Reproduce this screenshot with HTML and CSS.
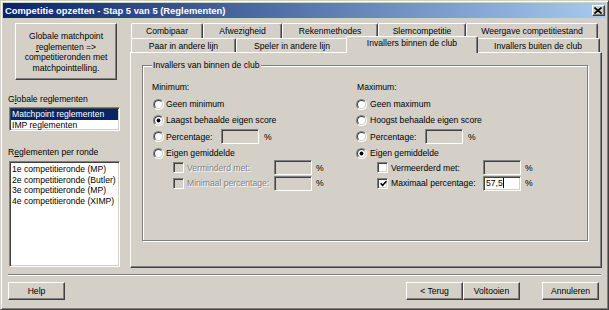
FILE: index.html
```html
<!DOCTYPE html>
<html>
<head>
<meta charset="utf-8">
<link rel="stylesheet" href="styles.css">
</head>
<body>
<div class="window">
  <div class="titlebar">
    <span class="title">Competitie opzetten - Stap 5 van 5 (Reglementen)</span>
    <span class="close"><svg width="8" height="7" viewBox="0 0 8 7"><path d="M0.5 0.5 L7.5 6.5 M7.5 0.5 L0.5 6.5" stroke="#000" stroke-width="1.6" fill="none"/></svg></span>
  </div>
  <div class="main">
    <div class="left">
      <div class="btn big"><span class="btxt">Globale matchpoint<br><u>r</u>eglementen =&gt;<br>competitieronden met<br>matchpointtelling.</span></div>
      <div class="label l1">G<u>l</u>obale reglementen</div>
      <div class="list list1">
        <div class="item sel">Matchpoint reglementen</div>
        <div class="item">IMP reglementen</div>
      </div>
      <div class="label l2">R<u>e</u>glementen per ronde</div>
      <div class="list list2">
        <div class="item">1e competitieronde (MP)</div>
        <div class="item">2e competitieronde (Butler)</div>
        <div class="item">3e competitieronde (MP)</div>
        <div class="item">4e competitieronde (XIMP)</div>
      </div>
    </div>
    <div class="tabctl">
      <div class="tabrow r1">
        <div class="tab w72">Combipaar</div>
        <div class="tab w79">Afwezigheid</div>
        <div class="tab w96">Rekenmethodes</div>
        <div class="tab w88">Slemcompetitie</div>
        <div class="tab w132">Weergave competitiestand</div>
      </div>
      <div class="tabrow r2">
        <div class="tab w105">Paar in andere lijn</div>
        <div class="tab w112">Speler in andere lijn</div>
        <div class="tab active">Invallers binnen de club</div>
        <div class="tab w124">Invallers buiten de club</div>
      </div>
      <div class="page">
        <fieldset class="group">
          <legend class="legend">Invallers van binnen de club</legend>
          <div class="cols">
            <div class="col colmin">
              <div class="heading">Minimum:</div>
              <div class="rrow"><span class="radio"><span class="rin"></span></span><span class="rlabel">Geen minimum</span></div>
              <div class="rrow"><span class="radio"><span class="rin"><span class="dot"></span></span></span><span class="rlabel">Laagst behaalde eigen score</span></div>
              <div class="rrow"><span class="radio"><span class="rin"></span></span><span class="rlabel plabel">Percentage:</span><span class="edit off"></span><span class="pct">%</span></div>
              <div class="rrow"><span class="radio"><span class="rin"></span></span><span class="rlabel">Eigen gemiddelde</span></div>
              <div class="crow first"><span class="check off"></span><span class="clabel dis cmin">Verminderd met:</span><span class="edit off"></span><span class="pct">%</span></div>
              <div class="crow"><span class="check off"></span><span class="clabel dis cmin">Minimaal percentage:</span><span class="edit off"></span><span class="pct">%</span></div>
            </div>
            <div class="col colmax">
              <div class="heading">Maximum:</div>
              <div class="rrow"><span class="radio"><span class="rin"></span></span><span class="rlabel">Geen maximum</span></div>
              <div class="rrow"><span class="radio"><span class="rin"></span></span><span class="rlabel">Hoogst behaalde eigen score</span></div>
              <div class="rrow"><span class="radio"><span class="rin"></span></span><span class="rlabel plabel">Percentage:</span><span class="edit off"></span><span class="pct">%</span></div>
              <div class="rrow"><span class="radio"><span class="rin"><span class="dot"></span></span></span><span class="rlabel">Eigen gemiddelde</span></div>
              <div class="crow first"><span class="check"></span><span class="clabel cmax">Vermeerderd met:</span><span class="edit off"></span><span class="pct">%</span></div>
              <div class="crow"><span class="check"><svg width="7" height="7" viewBox="0 0 7 7"><path d="M0.6 3.2 L2.6 5.4 L6.4 1.2" stroke="#000" stroke-width="1.6" fill="none"/></svg></span><span class="clabel cmax">Maximaal percentage:</span><span class="edit on">57,5<span class="caret"></span></span><span class="pct">%</span></div>
            </div>
          </div>
        </fieldset>
      </div>
    </div>
  </div>
  <div class="sep"></div>
  <div class="buttons">
    <div class="btn pb">Help</div>
    <div class="btn pb back">&lt; Terug</div>
    <div class="btn pb">Voltooien</div>
    <div class="btn pb cancel">Annuleren</div>
  </div>
</div>
</body>
</html>
```

FILE: styles.css
```css
* { box-sizing: border-box; }
html, body { margin: 0; padding: 0; }
body {
  width: 609px;
  height: 310px;
  overflow: hidden;
  background: #d4d0c8;
  font-family: "Liberation Sans", Arial, sans-serif;
  font-size: 8.6px;
  color: #000;
}
.window {
  width: 609px;
  height: 310px;
  border: 1px solid;
  border-color: #d4d0c8 #404040 #404040 #d4d0c8;
  box-shadow: inset 1px 1px #fff, inset -1px -1px #808080;
  padding: 2px;
  background: #d4d0c8;
}
.titlebar {
  height: 15px;
  background: linear-gradient(to right, #0a246a, #a6caf0);
  display: flex;
  align-items: center;
  justify-content: space-between;
  padding-left: 2px;
}
.title {
  color: #fff;
  font-weight: bold;
  font-size: 9.4px;
  white-space: nowrap;
}
.close {
  width: 13px;
  height: 11px;
  margin-right: 1px;
  background: #d4d0c8;
  border: 1px solid;
  border-color: #fff #404040 #404040 #fff;
  box-shadow: inset -1px -1px #808080;
  display: flex;
  align-items: center;
  justify-content: center;
}
.close svg { display: block; margin-left: -1px; margin-top: -1px; }

.main {
  height: 256px;
  display: flex;
  padding-left: 5px;
}
.left {
  width: 112px;
  padding-top: 5px;
  display: flex;
  flex-direction: column;
}
.btn {
  background: #d4d0c8;
  border: 1px solid;
  border-color: #fff #404040 #404040 #fff;
  box-shadow: inset -1px -1px #808080;
  text-align: center;
}
.big {
  margin-left: 7px;
  width: 102px;
  height: 57px;
  display: flex;
  align-items: center;
  justify-content: center;
  padding-top: 1px;
}
.btxt { display: block; line-height: 10.5px; text-align: center; white-space: nowrap; }
.label { line-height: 11px; white-space: nowrap; }
.l1 { margin-top: 14px; }
.l2 { margin-top: 16px; }
.list {
  margin-left: 1px;
  width: 111px;
  background: #fff;
  border: 1px solid;
  border-color: #808080 #fff #fff #808080;
  box-shadow: inset 1px 1px #404040, inset -1px -1px #d4d0c8;
  padding: 1px;
}
.list1 { margin-top: 2px; height: 24px; }
.list2 { margin-top: 3px; height: 106px; padding-top: 2px; }
.item { line-height: 10.7px; padding-left: 1px; white-space: nowrap; }
.item.sel { background: #0a246a; color: #fff; }

.tabctl {
  width: 472px;
  margin-left: 10px;
  margin-top: 5px;
  display: flex;
  flex-direction: column;
}
.tabrow { display: flex; padding-left: 1px; }
.r1 { height: 15px; }
.r2 { height: 14px; }
.tab {
  height: 100%;
  background: #d4d0c8;
  border-top: 1px solid #fff;
  border-left: 1px solid #fff;
  border-right: 1px solid #404040;
  box-shadow: inset -1px 0 #808080;
  border-radius: 2px 2px 0 0;
  text-align: center;
  white-space: nowrap;
}
.r1 .tab { line-height: 14px; }
.r2 .tab { line-height: 14px; }
.w72 { width: 72px; }
.w79 { width: 79px; }
.w96 { width: 96px; }
.w88 { width: 88px; }
.w132 { width: 132px; }
.w105 { width: 105px; }
.w112 { width: 112px; }
.w124 { width: 124px; }
.tab.active {
  width: 132px;
  margin: -2px -2px 0;
  height: 17px;
  line-height: 13px;
  position: relative;
  z-index: 1;
}
.page {
  height: 216px;
  background: #d4d0c8;
  border: 1px solid;
  border-color: #fff #404040 #404040 #fff;
  box-shadow: inset -1px -1px #808080;
  padding: 7px 0 0 11px;
}
.group {
  margin: 0;
  padding: 0 0 0 9px;
  width: 446px;
  height: 181px;
  border: 1px solid #808080;
  box-shadow: inset 1px 1px #fff, 1px 1px #fff;
  min-inline-size: 0;
}
.legend {
  padding: 0 1px;
  margin-left: 0;
  line-height: 11px;
  background: #d4d0c8;
  white-space: nowrap;
}
.cols { display: flex; }
.col { display: flex; flex-direction: column; }
.colmin { width: 204px; }
.colmax { width: 220px; }
.heading { padding-top: 9px; line-height: 14px; height: 23px; }
.colmax .heading { padding-left: 1px; }
.rrow {
  height: 16.3px;
  display: flex;
  align-items: center;
  white-space: nowrap;
}
.rrow:nth-child(2) { margin-top: 2px; }
.radio {
  width: 11px;
  height: 11px;
  margin-left: 1px;
  border-radius: 50%;
  border: 1px solid;
  border-color: #808080 #fff #fff #808080;
  display: flex;
  flex: none;
}
.colmax .radio { margin-left: 0; }
.rin {
  width: 9px;
  height: 9px;
  border-radius: 50%;
  border: 1px solid;
  border-color: #404040 #d4d0c8 #d4d0c8 #404040;
  background: #fff;
  display: flex;
  align-items: center;
  justify-content: center;
}
.dot {
  width: 3px;
  height: 3px;
  border-radius: 50%;
  background: #000;
  box-shadow: 0 0 0 0.4px #000;
}
.rlabel { margin-left: 2px; }
.plabel { width: 55px; flex: none; }
.colmax .rlabel { margin-left: 3px; }
.edit {
  width: 38px;
  height: 15px;
  border: 1px solid;
  border-color: #808080 #fff #fff #808080;
  box-shadow: inset 1px 1px #404040, inset -1px -1px #d4d0c8;
  background: #fff;
  flex: none;
  display: flex;
  align-items: center;
  padding-left: 2px;
  line-height: 11px;
}
.edit.off { background: #d4d0c8; }
.caret {
  display: inline-block;
  width: 1px;
  height: 10px;
  background: #000;
  margin-left: 0;
}
.pct { margin-left: 5px; }
.crow {
  height: 15.6px;
  display: flex;
  align-items: center;
  white-space: nowrap;
}
.crow.first { margin-top: -1.3px; }
.crow .pct { margin-left: 4px; }
.check {
  width: 11px;
  height: 11px;
  margin-left: 21px;
  flex: none;
  border: 1px solid;
  border-color: #808080 #fff #fff #808080;
  box-shadow: inset 1px 1px #404040, inset -1px -1px #d4d0c8;
  background: #fff;
  display: flex;
  align-items: center;
  justify-content: center;
}
.check svg { display: block; margin-left: 1px; margin-top: 1px; }
.check.off { background: #d4d0c8; }
.clabel { margin-left: 3px; flex: none; }
.cmin { width: 87px; }
.cmax { width: 92px; }
.dis { color: #808080; text-shadow: 1px 1px 0 #fff; }

.sep {
  margin: 0 5px;
  height: 2px;
  border-top: 1px solid #808080;
  border-bottom: 1px solid #fff;
}
.buttons {
  display: flex;
  margin-top: 6px;
  padding: 0 7px 0 5px;
}
.pb {
  width: 57px;
  height: 18px;
  line-height: 16px;
}
.back { margin-left: auto; }
.cancel { margin-left: 22px; }
```
